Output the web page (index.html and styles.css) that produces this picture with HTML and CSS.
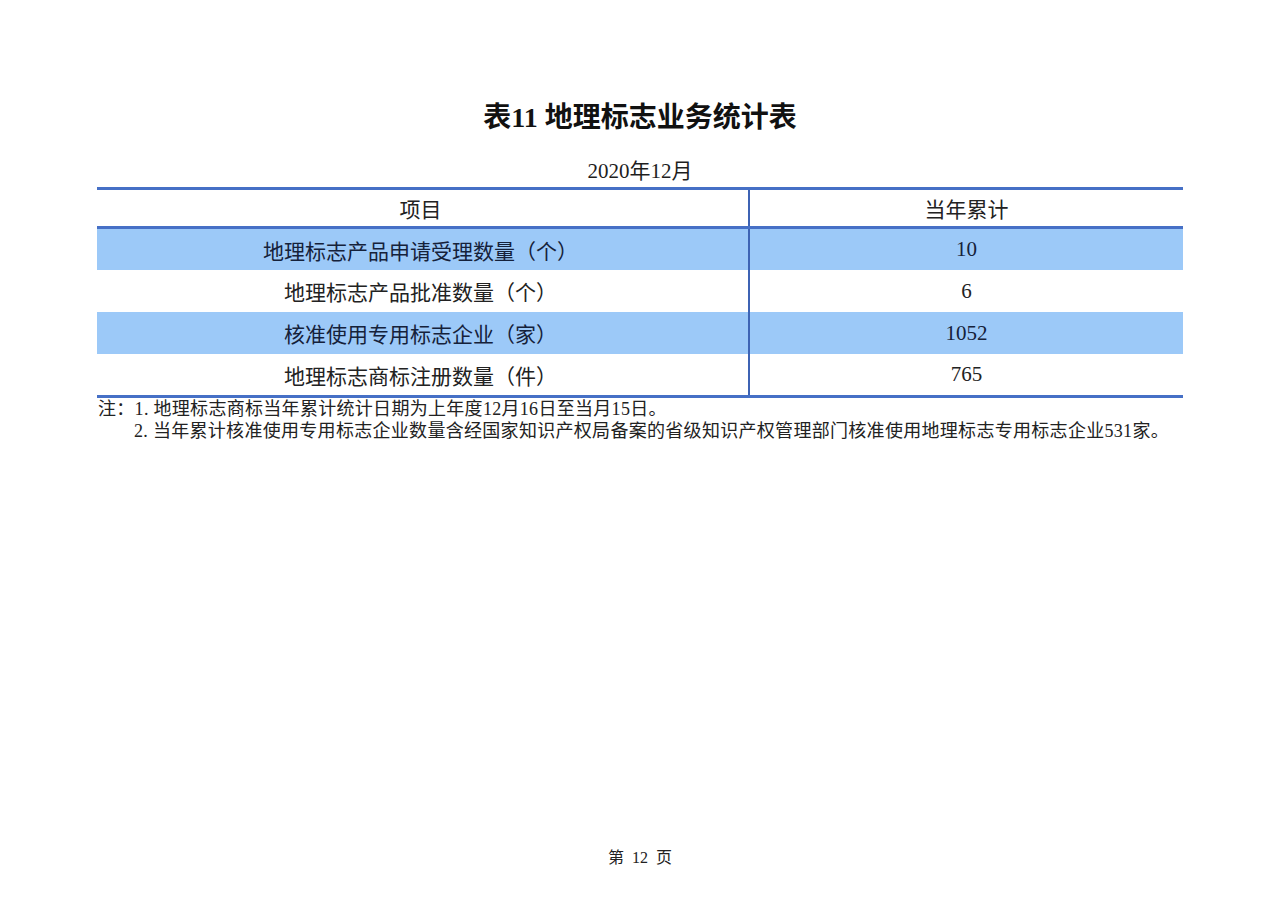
FILE: index.html
```html
<!DOCTYPE html>
<html lang="zh-CN">
<head>
<meta charset="utf-8">
<title>表11 地理标志业务统计表</title>
<link rel="stylesheet" href="styles.css">
</head>
<body>
<div class="page">
  <h1 class="title">表11 地理标志业务统计表</h1>
  <div class="date">2020年12月</div>
  <div class="table">
    <div class="row head">
      <div class="cell name">项目</div>
      <div class="cell value">当年累计</div>
    </div>
    <div class="row shade r1">
      <div class="cell name">地理标志产品申请受理数量（个）</div>
      <div class="cell value">10</div>
    </div>
    <div class="row r2">
      <div class="cell name">地理标志产品批准数量（个）</div>
      <div class="cell value">6</div>
    </div>
    <div class="row shade r3">
      <div class="cell name">核准使用专用标志企业（家）</div>
      <div class="cell value">1052</div>
    </div>
    <div class="row r4">
      <div class="cell name">地理标志商标注册数量（件）</div>
      <div class="cell value">765</div>
    </div>
  </div>
  <div class="notes">
    <p class="note">注：1.&nbsp;地理标志商标当年累计统计日期为上年度12月16日至当月15日。</p>
    <p class="note indent">2.&nbsp;当年累计核准使用专用标志企业数量含经国家知识产权局备案的省级知识产权管理部门核准使用地理标志专用标志企业531家。</p>
  </div>
  <div class="footer">第&nbsp;&nbsp;12&nbsp;&nbsp;页</div>
</div>
</body>
</html>
```

FILE: styles.css
```css
html, body {
  margin: 0;
  padding: 0;
  background: #ffffff;
}

body {
  font-family: "Liberation Serif", "Noto Sans CJK SC", serif;
  color: #1e1e1e;
}

.page {
  width: 1086px;
  height: 904px;
  margin: 0 auto;
  padding: 98px 0 35px;
  box-sizing: border-box;
  display: flex;
  flex-direction: column;
}

.title {
  margin: 0;
  font-size: 28px;
  line-height: 40px;
  font-weight: 700;
  text-align: center;
  color: #111111;
}

.date {
  margin-top: 19px;
  font-size: 21px;
  line-height: 28px;
  text-align: center;
  color: #1e1e1e;
}

.table {
  margin-top: 2px;
  border-top: 3px solid #4670c6;
  border-bottom: 3px solid #4670c6;
}

.row {
  display: grid;
  grid-template-columns: 651px 1fr;
  height: 42px;
}

.row.head {
  height: 36px;
  border-bottom: 3px solid #4670c6;
}

.row.r1,
.row.r4 {
  height: 41px;
}

.row.shade {
  background: #9cc9f8;
}

.cell {
  display: flex;
  align-items: center;
  justify-content: center;
  font-size: 21px;
  color: #222222;
}

.row.shade .cell {
  color: #15213a;
}

.cell.name {
  padding-right: 4px;
}

.cell.value {
  border-left: 2px solid #3d63b4;
}

.notes {
  padding-left: 1px;
}

.note {
  margin: 0;
  font-size: 18px;
  line-height: 22px;
  letter-spacing: 0.3px;
  color: #222222;
  white-space: nowrap;
}

.note.indent {
  padding-left: 36px;
}

.footer {
  margin-top: auto;
  text-align: center;
  font-size: 16px;
  line-height: 22px;
  color: #222222;
}
```
